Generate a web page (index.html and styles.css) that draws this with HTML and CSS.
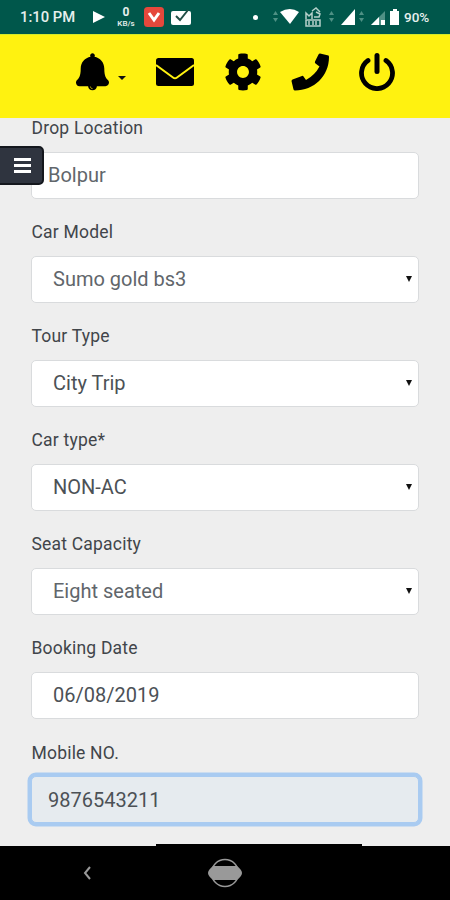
FILE: index.html
```html
<!DOCTYPE html>
<html lang="en">
<head>
  <meta charset="UTF-8" />
  <meta name="viewport" content="width=device-width, initial-scale=1.0"/>
  <title>Booking Details</title>
  <link rel="stylesheet" href="styles.css">
</head>
<body>
  <div class="screen">
    <!-- Status Bar -->
    <div class="status-bar">
      <span class="time">1:10 PM</span>
      <svg class="play" width="12" height="14" viewBox="0 0 12 14"><path d="M0 1l12 6-12 6z" fill="#fff"/></svg>
      <div class="speed"><b>0</b><span>KB/s</span></div>
      <svg class="app" width="20" height="20" viewBox="0 0 20 20"><rect width="20" height="20" rx="3.5" fill="#e5483c"/><path d="M5 6l5 7 5-7" fill="none" stroke="#fff" stroke-width="3"/></svg>
      <svg class="task" width="20" height="17" viewBox="0 0 20 17"><rect y="2" width="20" height="14" rx="2" fill="#fff"/><path d="M5 7l4 4 8-10" fill="none" stroke="#234f47" stroke-width="2"/></svg>
      <span class="dot"></span>
      <svg class="signals" width="141" height="24" viewBox="0 0 141 24">
        <g fill="#4f9185">
          <path d="M0 10l2.500-4 2.500 4zM0 13l2.500 4 2.500-4z"/>
          <path d="M56 10l2.500-4 2.500 4zM56 13l2.500 4 2.500-4z"/>
          <path d="M86 10l2.500-4 2.500 4zM86 13l2.500 4 2.500-4z"/>
        </g>
        <path d="M7 7q10-6 19 0l-9 12z" fill="#fff"/>
        <g fill="none" stroke="#b5d0ca" stroke-width="1.500">
          <path d="M33 14V8l3 3 3-3v6M39 6l4-3 4 4M41 12h5l1-3-4-2"/>
          <rect x="33" y="15" width="14" height="6"/>
          <path d="M36 16v4M40 16v4M43 16v4"/>
        </g>
        <path d="M68 20L82 4v16z" fill="#fff"/>
        <path d="M98 20l14-14v14z" fill="#4f9185"/>
        <path d="M98 20l8-8v8zM108 15h4v5h-4z" fill="#fff"/>
        <path d="M117 6h3V4h4v2h2v14h-9z" fill="#fff"/>
      </svg>
      <span class="battery">90%</span>
    </div>

    <!-- Header Icons -->
    <div class="header">
      <svg class="bell" width="33" height="38" viewBox="0 0 448 512"><path d="M434 366C412 344 384 316 384 208c0-79.400-57.800-145.300-133.700-157.800A31.800 31.800 0 0 0 256 32c0-17.700-14.300-32-32-32s-32 14.300-32 32c0 6.700 2.100 13 5.700 18.200C121.800 62.700 64 128.600 64 208c0 108-27.600 136-50 158C-16 396 5.300 448 48 448h116c4 34 28 56 60 56s56-22 60-56h116c42.600 0 64-51.700 34-82z"/><path d="M196 454c2 18 12 28 28 28" fill="none" stroke="#fff210" stroke-width="10"/></svg>
      <span class="caret"></span>
      <svg class="envelope" width="38" height="28" viewBox="0 0 38 28"><rect width="38" height="28" rx="2.500"/><path d="M0 7l17 12.500q2 1.500 4 0L38 7" fill="none" stroke="#fff210" stroke-width="2"/></svg>
      <svg class="cog" width="38" height="38" viewBox="0 0 512 512"><path d="M487.4 315.700l-42.600-24.600c4.300-23.200 4.300-47 0-70.200l42.600-24.600c4.900-2.800 7.100-8.600 5.500-14-11.100-35.600-30-67.800-54.700-94.600-3.800-4.100-10-5.100-14.800-2.300L380.800 110c-17.900-15.400-38.500-27.300-60.800-35.100V25.800c0-5.600-3.900-10.500-9.400-11.700-36.700-8.200-74.300-7.800-109.200 0-5.500 1.200-9.400 6.100-9.400 11.700V75c-22.200 7.900-42.800 19.800-60.800 35.100L88.700 85.500c-4.900-2.800-11-1.900-14.800 2.300-24.700 26.700-43.600 58.900-54.700 94.600-1.700 5.400.6 11.200 5.500 14L67.300 221c-4.300 23.200-4.300 47 0 70.200l-42.600 24.600c-4.900 2.800-7.100 8.600-5.500 14 11.100 35.600 30 67.800 54.700 94.600 3.800 4.100 10 5.100 14.800 2.300l42.600-24.600c17.900 15.400 38.500 27.300 60.800 35.100v49.200c0 5.600 3.900 10.500 9.400 11.700 36.700 8.200 74.300 7.800 109.200 0 5.500-1.200 9.400-6.100 9.400-11.700v-49.200c22.200-7.900 42.800-19.800 60.800-35.100l42.600 24.600c4.900 2.800 11 1.900 14.800-2.300 24.700-26.700 43.600-58.900 54.700-94.600 1.500-5.500-.7-11.300-5.600-14.100zM256 336c-44.100 0-80-35.900-80-80s35.900-80 80-80 80 35.900 80 80-35.900 80-80 80z"/></svg>
      <svg class="phone" width="38" height="38" viewBox="0 0 38 38"><path d="M29 .5l8.500 2q.5.500.500 1.500C38 23 23 37.500 4 37.500q-1 0-1.500-1L.5 28q0-1 1-1.500L11 23q1-.5 1.500.500L15 27q9-5 13.500-13.500l-4-3q-1-1-.5-2l3.500-7q.5-1 1.500-1z"/></svg>
      <svg class="power" width="38" height="38" viewBox="0 0 38 38"><path d="M10 7.500a15.500 15.500 0 1 0 18 0" fill="none" stroke="#000" stroke-width="4.800" stroke-linecap="round"/><path d="M19 2.500v16" stroke="#000" stroke-width="5" stroke-linecap="round"/></svg>
    </div>

    <!-- Booking Form -->
    <form class="booking">
      <div class="form-group">
        <label for="drop">Drop Location</label>
        <input type="text" id="drop" value="Bolpur" />
      </div>
      <div class="form-group">
        <label for="model">Car Model</label>
        <div class="select">
          <select id="model"><option>Sumo gold bs3</option></select>
        </div>
      </div>
      <div class="form-group">
        <label for="tour">Tour Type</label>
        <div class="select dark">
          <select id="tour"><option>City Trip</option></select>
        </div>
      </div>
      <div class="form-group">
        <label for="cartype">Car type*</label>
        <div class="select dark">
          <select id="cartype"><option>NON-AC</option></select>
        </div>
      </div>
      <div class="form-group">
        <label for="seats">Seat Capacity</label>
        <div class="select">
          <select id="seats"><option>Eight seated</option></select>
        </div>
      </div>
      <div class="form-group">
        <label for="date">Booking Date</label>
        <input type="text" id="date" class="date" value="06/08/2019" />
      </div>
      <div class="form-group">
        <label for="mobile">Mobile NO.</label>
        <input type="text" id="mobile" class="active" value="9876543211" readonly />
      </div>
    </form>

    <!-- Side Menu Toggle -->
    <button class="menu-toggle" type="button" aria-label="Menu">
      <span></span><span></span><span></span>
    </button>

    <!-- Phone Navigation -->
    <div class="nav-bar">
      <svg class="back" width="8" height="14" viewBox="0 0 8 14"><path d="M7 1L2 7l5 6" fill="none" stroke="#999" stroke-width="2"/></svg>
      <svg class="home" width="36" height="30" viewBox="0 0 36 30"><circle cx="18" cy="15" r="13.500" fill="none" stroke="#999" stroke-width="1.500"/><path d="M6 8h24q5 4 5 7t-5 7H6q-5-4-5-7t5-7z" fill="#999"/></svg>
    </div>
  </div>
</body>
</html>
```

FILE: styles.css
```css
* {
  box-sizing: border-box;
}

body {
  margin: 0;
  background-color: #eee;
  font-family: Roboto, "Liberation Sans", sans-serif;
}

.screen {
  position: relative;
  display: flex;
  flex-direction: column;
  width: 450px;
  height: 900px;
  overflow: hidden;
}

svg {
  flex: none;
}

/* Status bar */
.status-bar {
  flex: none;
  display: flex;
  align-items: center;
  height: 34px;
  padding-left: 20px;
  background-color: #00574b;
  color: #e6efed;
  font-size: 14.8px;
  font-weight: 500;
}

.time {
  width: 73px;
  white-space: nowrap;
}

.speed {
  display: flex;
  flex-direction: column;
  align-items: center;
  width: 20px;
  margin: 0 8px 0 11px;
  font-size: 12px;
  line-height: 14px;
}

.speed span {
  font-size: 8px;
  line-height: 10px;
}

.task {
  margin-left: 7px;
}

.dot {
  width: 5px;
  height: 5px;
  margin: 0 15px 0 62px;
  border-radius: 50%;
  background-color: #fff;
}

.battery {
  margin-left: -10px;
  font-size: 13.5px;
}

/* Header */
.header {
  flex: none;
  display: flex;
  align-items: center;
  height: 84px;
  padding: 0 0 10px 75.5px;
  background-color: #fff210;
  border-top: 1px solid #d5ea2a;
}

.caret {
  margin: 13px 30px 0 9.5px;
  border: 4.5px solid transparent;
  border-top-color: #111;
  border-bottom: 0;
}

.cog {
  margin: 0 29px 0 30px;
}

.power {
  margin-left: 29px;
}

/* Form */
.booking {
  flex: 1;
  min-height: 0;
  overflow: hidden;
  padding: 0 31px;
}

.form-group {
  height: 104.1px;
}

label {
  display: block;
  height: 33.5px;
  padding-left: 0.5px;
  color: #41454a;
  font-size: 17.5px;
  letter-spacing: 0.2px;
  line-height: 20px;
}

input,
select {
  display: block;
  width: 100%;
  height: 47px;
  margin: 0;
  padding: 0 16px;
  background-color: #fff;
  border: 1px solid #d9dbdd;
  border-radius: 5px;
  color: #61666b;
  font-family: inherit;
  font-size: 20px;
  appearance: none;
  outline: none;
}

select {
  padding-left: 21px;
}

.date {
  padding-left: 21px;
  color: #4c5156;
}

.select {
  position: relative;
}

.select::after {
  content: "";
  position: absolute;
  top: 20px;
  right: 7.5px;
  border: 3.5px solid transparent;
  border-top: 6px solid #111;
  border-bottom: 0;
}

.dark select {
  color: #4c5156;
}

.active {
  background-color: #e6ebef;
  border-color: #a9cbf1;
  box-shadow: 0 0 0 3.5px #a9cbf1;
  color: #4c5156;
}

/* Side menu toggle */
.menu-toggle {
  position: absolute;
  top: 146px;
  left: -4px;
  display: flex;
  flex-direction: column;
  align-items: flex-end;
  justify-content: center;
  gap: 3px;
  width: 48px;
  height: 39px;
  padding: 0 11px 0 0;
  background-color: #2f343f;
  border: 2px solid #14171d;
  border-radius: 5px;
}

.menu-toggle span {
  width: 17px;
  height: 3px;
  background-color: #fff;
}

/* Phone navigation */
.nav-bar {
  position: relative;
  flex: none;
  display: flex;
  align-items: center;
  height: 54px;
  padding: 0 0 0 83px;
  background-color: #000;
}

.nav-bar::before {
  content: "";
  position: absolute;
  top: -2px;
  left: 156px;
  width: 206px;
  height: 2px;
  background-color: #000;
}

.home {
  margin-left: 116px;
}
```
